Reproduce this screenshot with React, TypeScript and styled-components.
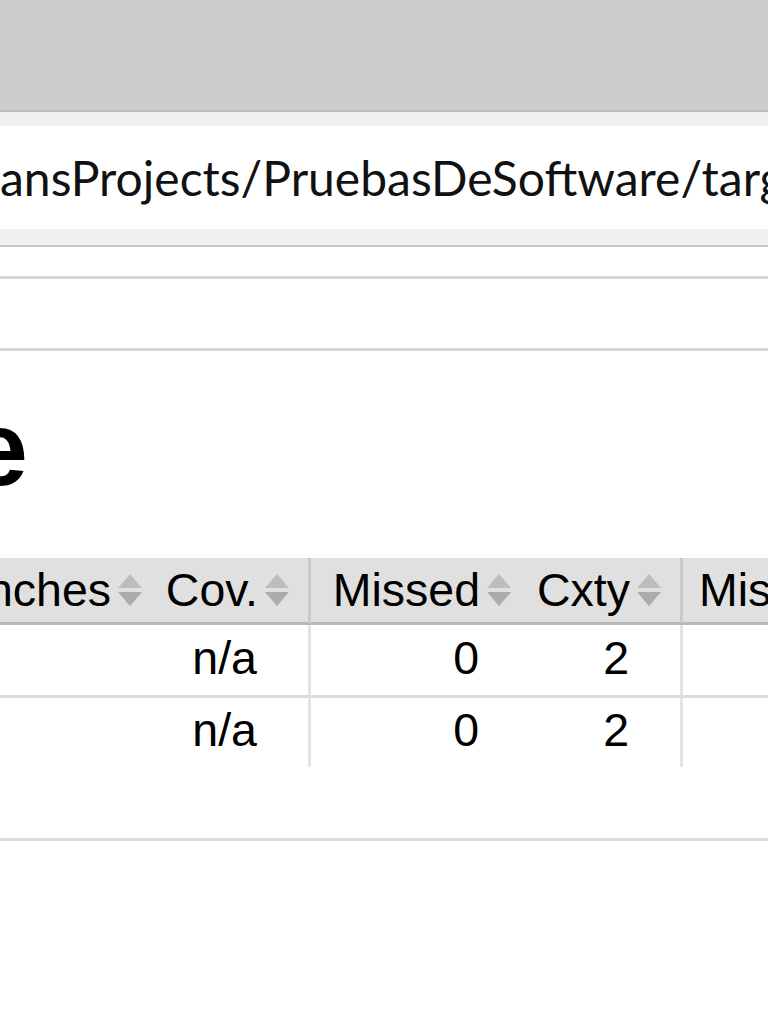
import React from "react";
import styled, { createGlobalStyle } from "styled-components";

const Global = createGlobalStyle`
  html, body {
    margin: 0;
    padding: 0;
    background: #ffffff;
    overflow: hidden;
  }
`;

const Window = styled.div`
  width: 768px;
  height: 1024px;
  overflow: hidden;
  display: flex;
  flex-direction: column;
  background: #ffffff;
`;

const TitleStrip = styled.div`
  flex: none;
  height: 110px;
  background: #cdcdcd;
  border-bottom: 2px solid #bdbdbd;
`;

const AddressRow = styled.div`
  flex: none;
  background: #f0f0f0;
  padding: 14px 0 16px;
  border-bottom: 2px solid #c6c6c6;
`;

const AddressField = styled.div`
  height: 103px;
  background: #ffffff;
  display: flex;
  align-items: center;
  overflow: hidden;
  white-space: nowrap;
  font-family: Lato, "Open Sans", sans-serif;
  font-size: 48px;
  color: #111111;
`;

const ScrolledOut = styled.span`
  flex: none;
  width: 0;
  overflow: hidden;
  display: flex;
  justify-content: flex-end;
`;

const Page = styled.div`
  flex: 1;
  padding-top: 29px;
  font-family: "Liberation Sans", Arial, sans-serif;
  color: #000000;
`;

const Breadcrumb = styled.div`
  height: 69px;
  border-top: 3px solid #d9d7d3;
  border-bottom: 3px solid #d9d7d3;
`;

const Heading = styled.h1`
  margin: 38px 0 49px;
  width: 28px;
  height: 120px;
  display: flex;
  justify-content: flex-end;
  overflow: hidden;
  white-space: nowrap;
  font-size: 105px;
  line-height: 120px;
  font-weight: bold;
`;

const Grid = styled.div`
  width: 1000px;
  display: grid;
  grid-template-columns: 161px 150px 219px 153px 1fr;
  font-size: 46.5px;
  white-space: nowrap;
`;

const HeadCell = styled.div<{ $divider?: boolean; $start?: boolean }>`
  box-sizing: border-box;
  height: 67px;
  background: #e0e0e0;
  border-bottom: 3px solid #b9b9b9;
  border-right: ${(p) => (p.$divider ? "3px solid #cacaca" : "none")};
  display: flex;
  align-items: center;
  justify-content: ${(p) => (p.$start ? "flex-start" : "flex-end")};
  gap: 6px;
  padding: ${(p) => (p.$start ? "0 0 0 16px" : "0 18px 0 0")};
  overflow: hidden;
`;

const BodyCell = styled.div<{ $divider?: boolean; $last?: boolean }>`
  box-sizing: border-box;
  height: ${(p) => (p.$last ? "69px" : "73px")};
  border-bottom: ${(p) => (p.$last ? "none" : "3px solid #dcdad6")};
  border-right: ${(p) => (p.$divider ? "3px solid #e4e4e4" : "none")};
  display: flex;
  align-items: center;
  justify-content: flex-end;
  padding: 0 51px 5px 0;
`;

const Footer = styled.div`
  margin-top: 71px;
  height: 40px;
  border-top: 3px solid #dcdad6;
`;

const SortIcon = () => (
  <svg width="26" height="34" viewBox="0 0 26 34" style={{ flex: "none" }}>
    <polygon points="13,1 25,15 1,15" fill="#bdbdbd" />
    <polygon points="1,19 25,19 13,33" fill="#ababab" />
  </svg>
);

const rows = [
  { cov: "n/a", missed: "0", cxty: "2" },
  { cov: "n/a", missed: "0", cxty: "2" },
];

export default function App() {
  return (
    <>
      <Global />
      <Window>
        <TitleStrip />
        <AddressRow>
          <AddressField>
            <ScrolledOut>file:///C:/Users/Usuario/Documents/NetBe</ScrolledOut>
            <span>ansProjects/PruebasDeSoftware/target/site/jacoco/index.html</span>
          </AddressField>
        </AddressRow>
        <Page>
          <Breadcrumb />
          <Heading>PruebasDeSoftware</Heading>
          <Grid>
            <HeadCell>
              Missed Branches
              <SortIcon />
            </HeadCell>
            <HeadCell $divider>
              Cov.
              <SortIcon />
            </HeadCell>
            <HeadCell>
              Missed
              <SortIcon />
            </HeadCell>
            <HeadCell $divider>
              Cxty
              <SortIcon />
            </HeadCell>
            <HeadCell $start>
              Missed
              <SortIcon />
            </HeadCell>
            {rows.map((r, i) => {
              const last = i === rows.length - 1;
              return (
                <React.Fragment key={i}>
                  <BodyCell $last={last} />
                  <BodyCell $last={last} $divider>
                    {r.cov}
                  </BodyCell>
                  <BodyCell $last={last}>{r.missed}</BodyCell>
                  <BodyCell $last={last} $divider>
                    {r.cxty}
                  </BodyCell>
                  <BodyCell $last={last} />
                </React.Fragment>
              );
            })}
          </Grid>
          <Footer />
        </Page>
      </Window>
    </>
  );
}
